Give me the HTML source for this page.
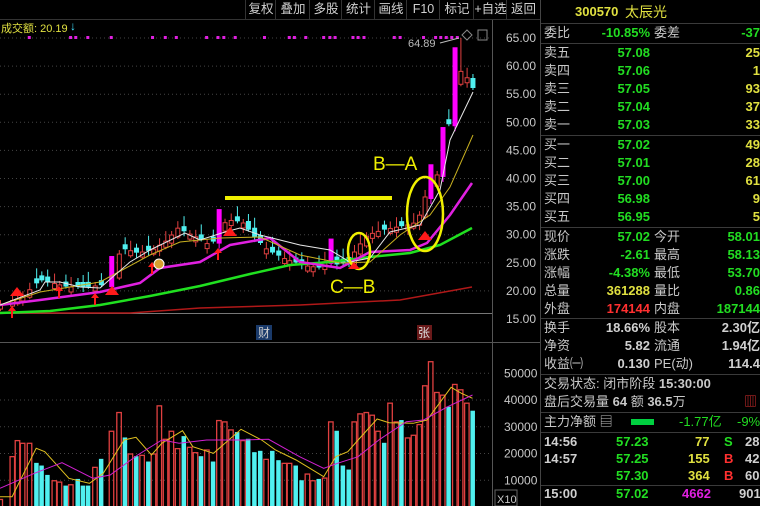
<!DOCTYPE html>
<html><head><meta charset="utf-8"><style>
*{margin:0;padding:0}
body{width:760px;height:506px;background:#000;overflow:hidden;position:relative;font-family:"Liberation Sans","Noto Sans CJK SC",sans-serif}
#c{position:absolute;left:0;top:0}
.p{position:absolute;left:540px;top:0;width:220px;height:506px;border-left:1px solid #444;font-size:13px;color:#c8c8c8}
.r{position:absolute;left:0;width:220px;height:18px;line-height:18px;white-space:nowrap}
.r span{position:absolute}
.l1{left:3px}.v1{right:111px;text-align:right;font-weight:bold}.l2{left:113px}.v2{right:1px;text-align:right;font-weight:bold}
.g{color:#22dd22}.y{color:#e0e040}.rd{color:#ff3030}.w{color:#d0d0d0}.m{color:#e020e0}
.sep{position:absolute;left:0;width:220px;border-top:1px solid #3a3a3a}
.tb{position:absolute;top:0;height:19px;font-size:12.5px;color:#d0d0d0;line-height:19px;text-align:center;border-left:1px solid #333}
</style></head><body>
<svg id="c" width="540" height="506" xmlns="http://www.w3.org/2000/svg" font-family="Liberation Sans, Noto Sans CJK SC, sans-serif">
<line x1="0" y1="19.5" x2="540" y2="19.5" stroke="#333"/>
<line x1="492.5" y1="20" x2="492.5" y2="506" stroke="#555"/>
<line x1="0" y1="313.5" x2="492" y2="313.5" stroke="#777"/>
<line x1="0" y1="342.5" x2="540" y2="342.5" stroke="#555"/>
<g id="grid" stroke="#444" stroke-dasharray="1 3"></g>
<g font-size="12" fill="#c8c8c8" id="pl"></g>
<g id="vol"></g>
<g id="cand"></g>
<g id="ma" fill="none"></g>
<g id="dots" fill="#e020e0"></g>
<text x="1" y="32" font-size="11" fill="#e0e040">成交额: 20.19</text>
<text x="70" y="30" font-size="12" fill="#40e0ff">↓</text>
<text x="408" y="47" font-size="11" fill="#bbb">64.89</text>
<line x1="440" y1="43" x2="459" y2="38" stroke="#bbb"/>
<path d="M467 30 l5 5 -5 5 -5 -5z" fill="none" stroke="#888"/>
<rect x="478" y="30" width="9" height="10" fill="none" stroke="#888"/>
<rect x="256" y="325" width="16" height="15" fill="#1a3a6a"/><text x="258" y="337" font-size="12" fill="#ccc">财</text>
<rect x="417" y="325" width="15" height="15" fill="#6a1a1a"/><text x="418" y="337" font-size="12" fill="#ddd">张</text>
<rect x="225" y="196" width="167" height="4" fill="#f0f000"/>
<text x="373" y="170" font-size="19" fill="#f0f000">B—A</text>
<text x="330" y="293" font-size="19" fill="#f0f000">C—B</text>
<ellipse cx="359" cy="251" rx="11" ry="18" fill="none" stroke="#f0f000" stroke-width="2.5"/>
<ellipse cx="425" cy="214" rx="18" ry="37" fill="none" stroke="#f0f000" stroke-width="2.5"/>
<g fill="#ff1a1a">
<path d="M10 296l7 -9 7 9z"/><path d="M105 295l7 -9 7 9z"/><path d="M223 236l7 -9 7 9z"/><path d="M348 269l6 -7 6 7z"/><path d="M418 240l7 -9 7 9z"/>
<path d="M12 306l-4 5h3v7h2v-7h3z"/><path d="M59 286l-4 5h3v7h2v-7h3z"/><path d="M95 293l-4 5h3v7h2v-7h3z"/><path d="M152 262l-4 5h3v7h2v-7h3z"/><path d="M218 248l-4 5h3v7h2v-7h3z"/>
</g>
<circle cx="159" cy="264" r="5" fill="#d8a030" stroke="#fff"/>
<rect x="495" y="490" width="22" height="16" fill="none" stroke="#666"/>
<text x="497" y="503" font-size="11" fill="#c8c8c8">X10</text>
</svg>
<div class="tb" style="left:245px;width:30px">复权</div>
<div class="tb" style="left:275px;width:34px">叠加</div>
<div class="tb" style="left:309px;width:32px">多股</div>
<div class="tb" style="left:341px;width:33px">统计</div>
<div class="tb" style="left:374px;width:32px">画线</div>
<div class="tb" style="left:406px;width:33px">F10</div>
<div class="tb" style="left:439px;width:34px">标记</div>
<div class="tb" style="left:473px;width:33px">+自选</div>
<div class="tb" style="left:506px;width:33px">返回</div>
<div class="p">
<div class="r" style="top:3px"><span class="y" style="left:34px;font-weight:bold">300570</span><span class="y" style="left:84px;font-size:14px">太辰光</span></div>
<div class="sep" style="top:23px"></div>
<div class="r" style="top:24px"><span class="l1">委比</span><span class="v1 g">-10.85%</span><span class="l2">委差</span><span class="v2 g">-37</span></div>
<div class="sep" style="top:43px"></div>
<div class="r" style="top:44px"><span class="l1">卖五</span><span class="v1 g">57.08</span><span class="v2 y">25</span></div>
<div class="r" style="top:62px"><span class="l1">卖四</span><span class="v1 g">57.06</span><span class="v2 y">1</span></div>
<div class="r" style="top:80px"><span class="l1">卖三</span><span class="v1 g">57.05</span><span class="v2 y">93</span></div>
<div class="r" style="top:98px"><span class="l1">卖二</span><span class="v1 g">57.04</span><span class="v2 y">37</span></div>
<div class="r" style="top:116px"><span class="l1">卖一</span><span class="v1 g">57.03</span><span class="v2 y">33</span></div>
<div class="sep" style="top:135px"></div>
<div class="r" style="top:136px"><span class="l1">买一</span><span class="v1 g">57.02</span><span class="v2 y">49</span></div>
<div class="r" style="top:154px"><span class="l1">买二</span><span class="v1 g">57.01</span><span class="v2 y">28</span></div>
<div class="r" style="top:172px"><span class="l1">买三</span><span class="v1 g">57.00</span><span class="v2 y">61</span></div>
<div class="r" style="top:190px"><span class="l1">买四</span><span class="v1 g">56.98</span><span class="v2 y">9</span></div>
<div class="r" style="top:208px"><span class="l1">买五</span><span class="v1 g">56.95</span><span class="v2 y">5</span></div>
<div class="sep" style="top:227px"></div>
<div class="r" style="top:228px"><span class="l1">现价</span><span class="v1 g">57.02</span><span class="l2">今开</span><span class="v2 g">58.01</span></div>
<div class="r" style="top:246px"><span class="l1">涨跌</span><span class="v1 g">-2.61</span><span class="l2">最高</span><span class="v2 g">58.13</span></div>
<div class="r" style="top:264px"><span class="l1">涨幅</span><span class="v1 g">-4.38%</span><span class="l2">最低</span><span class="v2 g">53.70</span></div>
<div class="r" style="top:282px"><span class="l1">总量</span><span class="v1 y">361288</span><span class="l2">量比</span><span class="v2 g">0.86</span></div>
<div class="r" style="top:300px"><span class="l1">外盘</span><span class="v1 rd">174144</span><span class="l2">内盘</span><span class="v2 g">187144</span></div>
<div class="sep" style="top:318px"></div>
<div class="r" style="top:319px"><span class="l1">换手</span><span class="v1 w">18.66%</span><span class="l2">股本</span><span class="v2 w">2.30亿</span></div>
<div class="r" style="top:337px"><span class="l1">净资</span><span class="v1 w">5.82</span><span class="l2">流通</span><span class="v2 w">1.94亿</span></div>
<div class="r" style="top:355px"><span class="l1">收益㈠</span><span class="v1 w">0.130</span><span class="l2">PE(动)</span><span class="v2 w">114.4</span></div>
<div class="sep" style="top:374px"></div>
<div class="r" style="top:375px"><span class="l1">交易状态: 闭市阶段 <b>15:30:00</b></span></div>
<div class="r" style="top:393px"><span class="l1">盘后交易量 <b>64</b> 额 <b>36.5</b>万</span><span style="right:4px;color:#e03030">▥</span></div>
<div class="sep" style="top:412px"></div>
<div class="r" style="top:413px"><span class="l1">主力净额 ▤</span><span style="left:90px;top:6px;width:23px;height:6px;background:#00d040"></span><span class="g" style="left:138px">-1.77亿</span><span class="g" style="left:196px">-9%</span></div>
<div class="sep" style="top:432px"></div>
<div class="r" style="top:433px;font-weight:bold"><span class="l1 w">14:56</span><span class="g" style="left:75px">57.23</span><span class="y" style="left:154px">77</span><span class="g" style="left:183px">S</span><span class="w" style="left:204px">28</span></div>
<div class="r" style="top:450px;font-weight:bold"><span class="l1 w">14:57</span><span class="g" style="left:75px">57.25</span><span class="y" style="left:147px">155</span><span class="rd" style="left:183px">B</span><span class="w" style="left:204px">42</span></div>
<div class="r" style="top:467px;font-weight:bold"><span class="g" style="left:75px">57.30</span><span class="y" style="left:147px">364</span><span class="rd" style="left:183px">B</span><span class="w" style="left:204px">60</span></div>
<div class="sep" style="top:485px"></div>
<div class="r" style="top:485px;font-weight:bold"><span class="l1 w">15:00</span><span class="g" style="left:75px">57.02</span><span class="m" style="left:141px">4662</span><span class="w" style="left:198px">901</span></div>
</div>
<script>
var NS="http://www.w3.org/2000/svg";
function el(p,t,a){var e=document.createElementNS(NS,t);for(var k in a)e.setAttribute(k,a[k]);document.getElementById(p).appendChild(e);return e;}
for(var i=0;i<11;i++){var p=65-i*5,y=38+i*28.1;if(i<10)el('grid','line',{x1:0,y1:y,x2:492,y2:y});var t=el('pl','text',{x:506,y:y+4});t.textContent=p.toFixed(2);}
[50000,40000,30000,20000,10000].forEach(function(v){var y=507-v/10000*26.75;el('grid','line',{x1:0,y1:y,x2:492,y2:y});var t=el('pl','text',{x:504,y:y+4});t.textContent=v;});
var V=[[0,3,'r'],[35,19,'r'],[50,25,'r'],[65,24,'r'],[85,24,'r'],[105,16.5,'c'],[120,15.5,'c'],[137,12,'c'],[157,10,'r'],[172,9.5,'r'],[190,8,'c'],[205,8.5,'r'],[225,10.5,'c'],[240,8,'c'],[255,8,'c'],[275,15,'r'],[293,18,'c'],[323,28.5,'r'],[345,35.5,'r'],[362,26,'c'],[378,20,'r'],[395,19,'c'],[412,19.5,'r'],[430,17,'c'],[445,20,'r'],[462,38,'r'],[480,25.5,'r'],[497,28.5,'r'],[515,22,'r'],[533,26.5,'c'],[550,22.5,'r'],[567,20.5,'r'],[583,19,'c'],[600,21.5,'r'],[618,17,'c'],[635,32.5,'r'],[652,32,'r'],[670,29,'r'],[688,28,'c'],[705,25,'r'],[720,25.5,'c'],[738,20.5,'c'],[755,21,'c'],[772,18,'r'],[790,21,'c'],[808,17.5,'c'],[825,16.5,'r'],[840,16.5,'r'],[858,15.5,'c'],[875,10,'c'],[892,12.5,'r'],[908,10,'r'],[925,10.5,'c'],[942,11,'r'],[960,32,'r'],[977,28.5,'c'],[995,15.5,'c'],[1012,14,'c'],[1028,32,'r'],[1045,35,'r'],[1063,35.5,'r'],[1080,34.5,'r'],[1097,28.5,'r'],[1115,24,'c'],[1132,39,'r'],[1150,32,'r'],[1165,32.5,'c'],[1183,26,'r'],[1200,27,'r'],[1217,31,'r'],[1233,45.5,'r'],[1250,54.5,'r'],[1268,43,'r'],[1285,42,'r'],[1302,37.5,'c'],[1320,46,'r'],[1337,44,'r'],[1355,39,'r'],[1372,36,'c']];
V.forEach(function(b){var x=b[0]/2.904,h=b[1]*2.675,y=507-h;if(b[2]=='c')el('vol','rect',{x:x-2,y:y,width:4.5,height:h,fill:'#50f0f0'});else el('vol','rect',{x:x-2,y:y+.5,width:4.5,height:h,fill:'none',stroke:'#e04040','stroke-width':1.3});});
function pl(pts,col,w,sx,sy,oy){var s=pts.map(function(p){return (p[0]*sx).toFixed(1)+','+(p[1]*sy+oy).toFixed(1)}).join(' ');el('ma','polyline',{points:s,stroke:col,'stroke-width':w});}
pl([[0,470],[35,470],[105,325],[130,335],[200,415],[260,430],[300,400],[360,300],[395,292],[440,345],[470,310],[530,272],[560,320],[620,340],[700,268],[760,300],[800,330],[860,360],[940,410],[975,350],[1010,335],[1040,300],[1095,237],[1130,248],[1200,250],[1240,240],[1310,142],[1340,160],[1372,175]],'#e0c020',1,1/2.904,1/3,340);
pl([[0,445],[100,400],[180,368],[270,415],[320,405],[400,345],[470,300],[520,310],[600,300],[700,300],[780,298],[870,350],[940,385],[980,370],[1040,350],[1100,300],[1180,245],[1230,240],[1300,200],[1372,165]],'#d020d0',1,1/2.904,1/3,340);
var K=[[0,305],[20,299],[30,292],[38,284],[45,280],[55,283],[70,287],[90,287],[105,285],[113,284],[117,258],[128,249],[140,253],[155,250],[170,240],[180,228],[190,233],[205,240],[214,247],[219,232],[230,220],[245,222],[255,235],[270,250],[290,260],[310,266],[325,268],[330,255],[340,265],[352,262],[358,250],[370,235],[385,230],[410,225],[420,222],[430,189],[438,178],[445,165],[450,135],[455,95],[460,70],[465,72],[473,82]];
function cy(x){for(var i=1;i<K.length;i++)if(x<=K[i][0]){var a=K[i-1],b=K[i];return a[1]+(b[1]-a[1])*(x-a[0])/(b[0]-a[0]);}return 82;}
var mag=[113,219,330,428,444,455];
var prev=306;
V.forEach(function(b,i){var x=b[0]/2.904,c=cy(x+3);var up=b[2]=='r';var o=up?Math.max(c+5,prev+2):Math.min(c-5,prev-2);if(i==V.length-1){o=78;c=88;}
var isM=mag.some(function(m){return Math.abs(m-x)<3;});
var top=Math.min(o,c),bot=Math.max(o,c);var hi=top-4-(i%3)*3,lo=bot+2+(i%2)*3;if(i==V.length-3)hi=38;
var col=isM?'#ff00ff':(up?'#e04040':'#50f0f0');
el('cand','line',{x1:x+.5,y1:hi,x2:x+.5,y2:lo,stroke:col});
if(isM){var t=Math.min(top,c-(x>440?35:20));el('cand','rect',{x:x-2,y:t,width:5,height:bot-t,fill:col});}
else if(up)el('cand','rect',{x:x-1.5,y:top,width:4,height:Math.max(bot-top,3),fill:'#000',stroke:col});
else el('cand','rect',{x:x-2,y:top,width:5,height:Math.max(bot-top,3),fill:col});
prev=c;});
function p2(pts,col,w){el('ma','polyline',{points:pts.map(function(p){return p.join(',')}).join(' '),stroke:col,'stroke-width':w});}
p2([[0,313],[130,313],[200,308],[300,305],[400,300],[472,287]],'#b01818',1.5);
p2([[0,313],[50,311],[100,305],[150,296],[200,286],[250,274],[290,265],[330,262],[370,257],[410,253],[440,245],[472,228]],'#20e020',2.5);
p2([[0,305],[40,300],[100,292],[140,283],[160,268],[200,262],[230,245],[270,238],[300,262],[340,268],[370,252],[410,250],[427,243],[450,215],[472,183]],'#e020e0',2.5);
p2([[0,305],[40,292],[100,282],[150,255],[180,242],[220,238],[260,237],[300,255],[340,263],[370,262],[400,235],[430,215],[450,187],[473,135]],'#c8b020',1);
p2([[0,305],[40,290],[45,282],[60,282],[80,287],[100,288],[130,262],[150,250],[185,233],[200,240],[225,232],[240,228],[260,235],[300,245],[330,250],[350,262],[370,258],[390,232],[420,225],[440,190],[450,140],[473,92]],'#e8e8e8',1);
[85,205,220,255,323,443,480,512,600,633,650,683,768,840,855,888,940,958,973,1025,1040,1057,1145,1162,1230,1265,1280,1296,1312,1328].forEach(function(z){el('dots','rect',{x:z/2.904-1.5,y:36,width:3,height:3});});
</script>
</body></html>
